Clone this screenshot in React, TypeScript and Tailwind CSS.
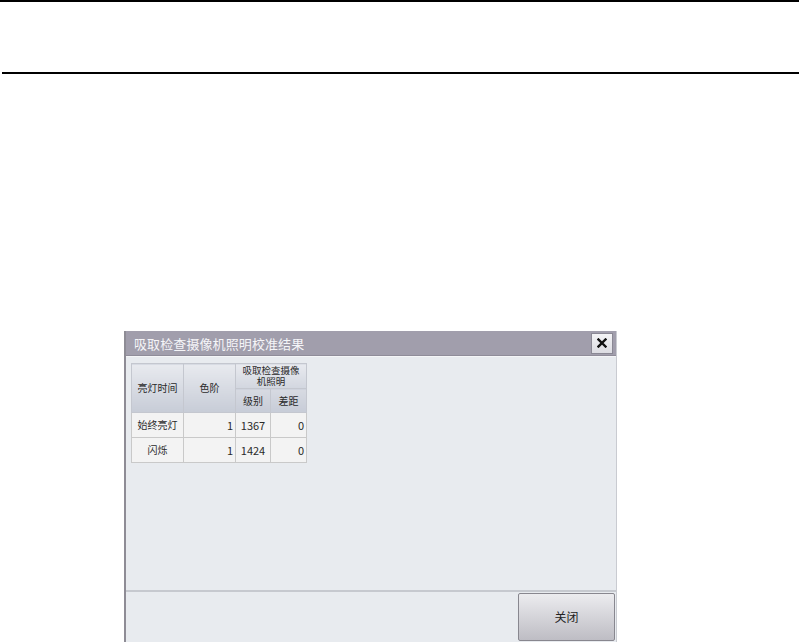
import React from "react";

const font = { fontFamily: '"Noto Sans CJK SC", "Noto Sans", sans-serif' };

export default function App() {
  return (
    <div className="w-[799px] h-[642px] overflow-hidden bg-white relative" style={font}>
      <div className="h-[2px] bg-black w-full" />
      <div className="h-[70px]" />
      <div className="h-[2px] bg-black ml-[2px]" />
      <div className="h-[257px]" />
      <div className="ml-[124px] w-[493px] h-[320px] flex flex-col bg-[#e8ebef] border-l-2 border-r border-[#8e8c95] border-r-[#c9cbd1]">
        <div className="h-[25px] shrink-0 bg-[#a19eac] flex items-center justify-between pl-[8px] pr-[3px] border-b border-[#8f8c99]">
          <span className="text-[13px] text-[#f5f5f8] leading-none tracking-[0.1px]">吸取检查摄像机照明校准结果</span>
          <div className="w-[22px] h-[21px] bg-gradient-to-b from-[#f3f3f5] to-[#dcdce2] border border-[#8a8894] flex items-center justify-center">
            <svg width="10" height="10" viewBox="0 0 10 10">
              <path d="M1.5 1.5 L8.5 8.5 M8.5 1.5 L1.5 8.5" stroke="#111" strokeWidth="2.4" strokeLinecap="square" />
            </svg>
          </div>
        </div>
        <div className="flex-1 pt-[6px] pl-[5px] border-t border-[#f4f5f7]">
          <table className="border-collapse text-[10px] text-[#2a2a2a] leading-none">
            <tbody>
              <tr className="h-[25px]">
                <td rowSpan={2} className="w-[52px] h-[49px] text-center align-middle border border-[#c4c7cf] bg-gradient-to-b from-[#e8eaef] to-[#c7ccd7]">亮灯时间</td>
                <td rowSpan={2} className="w-[52px] text-center align-middle border border-[#c4c7cf] bg-gradient-to-b from-[#e8eaef] to-[#c7ccd7]">色阶</td>
                <td colSpan={2} className="h-[25px] p-0 text-center align-middle border border-[#c4c7cf] bg-gradient-to-b from-[#e8eaef] to-[#d2d6df]">
                  <div className="flex flex-col items-center text-[9.5px] leading-[11.5px]">
                    <span>吸取检查摄像</span>
                    <span>机照明</span>
                  </div>
                </td>
              </tr>
              <tr className="h-[24px]">
                <td className="w-[35px] text-center align-middle border border-[#c4c7cf] bg-gradient-to-b from-[#d7dae2] to-[#c7ccd7]">级别</td>
                <td className="w-[36px] text-center align-middle border border-[#c4c7cf] bg-gradient-to-b from-[#d7dae2] to-[#c7ccd7]">差距</td>
              </tr>
              <tr className="h-[25px] bg-[#f3f3f3]">
                <td className="text-center border border-[#c9c9c9]">始终亮灯</td>
                <td className="text-right pr-[2px] border border-[#c9c9c9] text-[11px]">1</td>
                <td className="text-center border border-[#c9c9c9] text-[11px]">1367</td>
                <td className="text-right pr-[2px] border border-[#c9c9c9] text-[11px]">0</td>
              </tr>
              <tr className="h-[25px] bg-[#f3f3f3]">
                <td className="text-center border border-[#c9c9c9]">闪烁</td>
                <td className="text-right pr-[2px] border border-[#c9c9c9] text-[11px]">1</td>
                <td className="text-center border border-[#c9c9c9] text-[11px]">1424</td>
                <td className="text-right pr-[2px] border border-[#c9c9c9] text-[11px]">0</td>
              </tr>
            </tbody>
          </table>
        </div>
        <div className="h-[61px] shrink-0 border-t-2 border-[#c6c9cf] flex justify-end items-start pt-[1px] pr-[1px]">
          <div className="w-[97px] h-[48px] bg-gradient-to-b from-[#ececef] to-[#bebdc4] border border-[#88878f] rounded-[2px] flex items-center justify-center text-[12px] text-[#222]">
            关闭
          </div>
        </div>
      </div>
    </div>
  );
}
